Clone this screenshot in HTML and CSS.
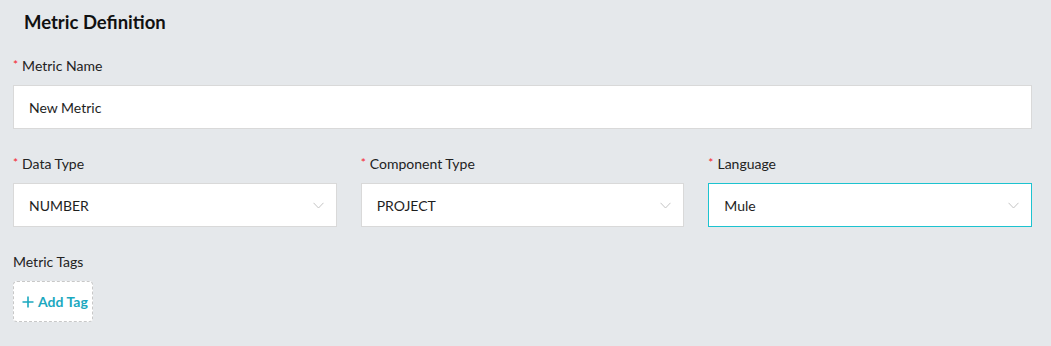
FILE: index.html
```html
<!DOCTYPE html>
<html>
<head>
<meta charset="utf-8">
<link rel="stylesheet" href="styles.css">
</head>
<body>
<div class="page">
  <h1 class="title">Metric Definition</h1>
  <div class="field">
    <label class="label"><span class="req">*</span>Metric Name</label>
    <div class="input">New Metric</div>
  </div>
  <div class="row">
    <div class="field">
      <label class="label"><span class="req">*</span>Data Type</label>
      <div class="input select"><span>NUMBER</span>
        <svg class="chev" width="11" height="7" viewBox="0 0 11 7"><path d="M0.5 0.8 L5.5 6 L10.5 0.8" fill="none" stroke="#c4c4c4" stroke-width="1"/></svg>
      </div>
    </div>
    <div class="field">
      <label class="label"><span class="req">*</span>Component Type</label>
      <div class="input select"><span>PROJECT</span>
        <svg class="chev" width="11" height="7" viewBox="0 0 11 7"><path d="M0.5 0.8 L5.5 6 L10.5 0.8" fill="none" stroke="#c4c4c4" stroke-width="1"/></svg>
      </div>
    </div>
    <div class="field">
      <label class="label"><span class="req">*</span>Language</label>
      <div class="input select focused"><span>Mule</span>
        <svg class="chev" width="11" height="7" viewBox="0 0 11 7"><path d="M0.5 0.8 L5.5 6 L10.5 0.8" fill="none" stroke="#c4c4c4" stroke-width="1"/></svg>
      </div>
    </div>
  </div>
  <div class="field">
    <label class="label plain">Metric Tags</label>
    <button class="add-tag"><svg class="plus" width="12" height="12" viewBox="0 0 12 12"><path d="M6 0.5 V11.5 M0.5 6 H11.5" stroke="#1ba8bf" stroke-width="1.6" fill="none"/></svg>Add Tag</button>
  </div>
</div>
</body>
</html>
```

FILE: styles.css
```css
html, body {
  margin: 0;
  padding: 0;
  background: #e5e8eb;
  font-family: Lato, "Open Sans", sans-serif;
  color: #1e1e1e;
}
.page {
  padding: 10px 19px 0 13px;
}
.title {
  margin: 0 0 21px 0;
  padding-left: 11px;
  font-size: 18.5px;
  line-height: 25px;
  font-weight: 700;
  color: #111;
}
.field {
  display: flex;
  flex-direction: column;
  margin-bottom: 25px;
}
.label {
  display: flex;
  align-items: center;
  font-size: 14px;
  line-height: 20px;
  height: 20px;
  margin-bottom: 9px;
  color: #222;
}
.req {
  color: #f5222d;
  font-size: 12px;
  line-height: 12px;
  margin-right: 4px;
  position: relative;
  top: -1px;
}
.input {
  box-sizing: border-box;
  height: 44px;
  background: #fff;
  border: 1px solid #d9d9d9;
  padding: 0 15px;
  display: flex;
  align-items: center;
  font-size: 14px;
  color: #1e1e1e;
}
.select {
  justify-content: space-between;
  padding-right: 12px;
}
.focused {
  border-color: #1cc3d0;
}
.row {
  display: grid;
  grid-template-columns: 1fr 1fr 1fr;
  column-gap: 24px;
}
.row .field {
  margin-bottom: 25px;
}
.add-tag {
  align-self: flex-start;
  box-sizing: border-box;
  width: 80px;
  height: 41px;
  background: #fff;
  border: 1px dashed #c8c8c8;
  border-radius: 4px;
  font-family: Lato, "Open Sans", sans-serif;
  font-size: 14px;
  font-weight: 700;
  color: #1ba8bf;
  display: flex;
  align-items: center;
  padding: 0 0 0 8px;
}
.plus {
  margin-right: 4px;
  flex: none;
}
```
